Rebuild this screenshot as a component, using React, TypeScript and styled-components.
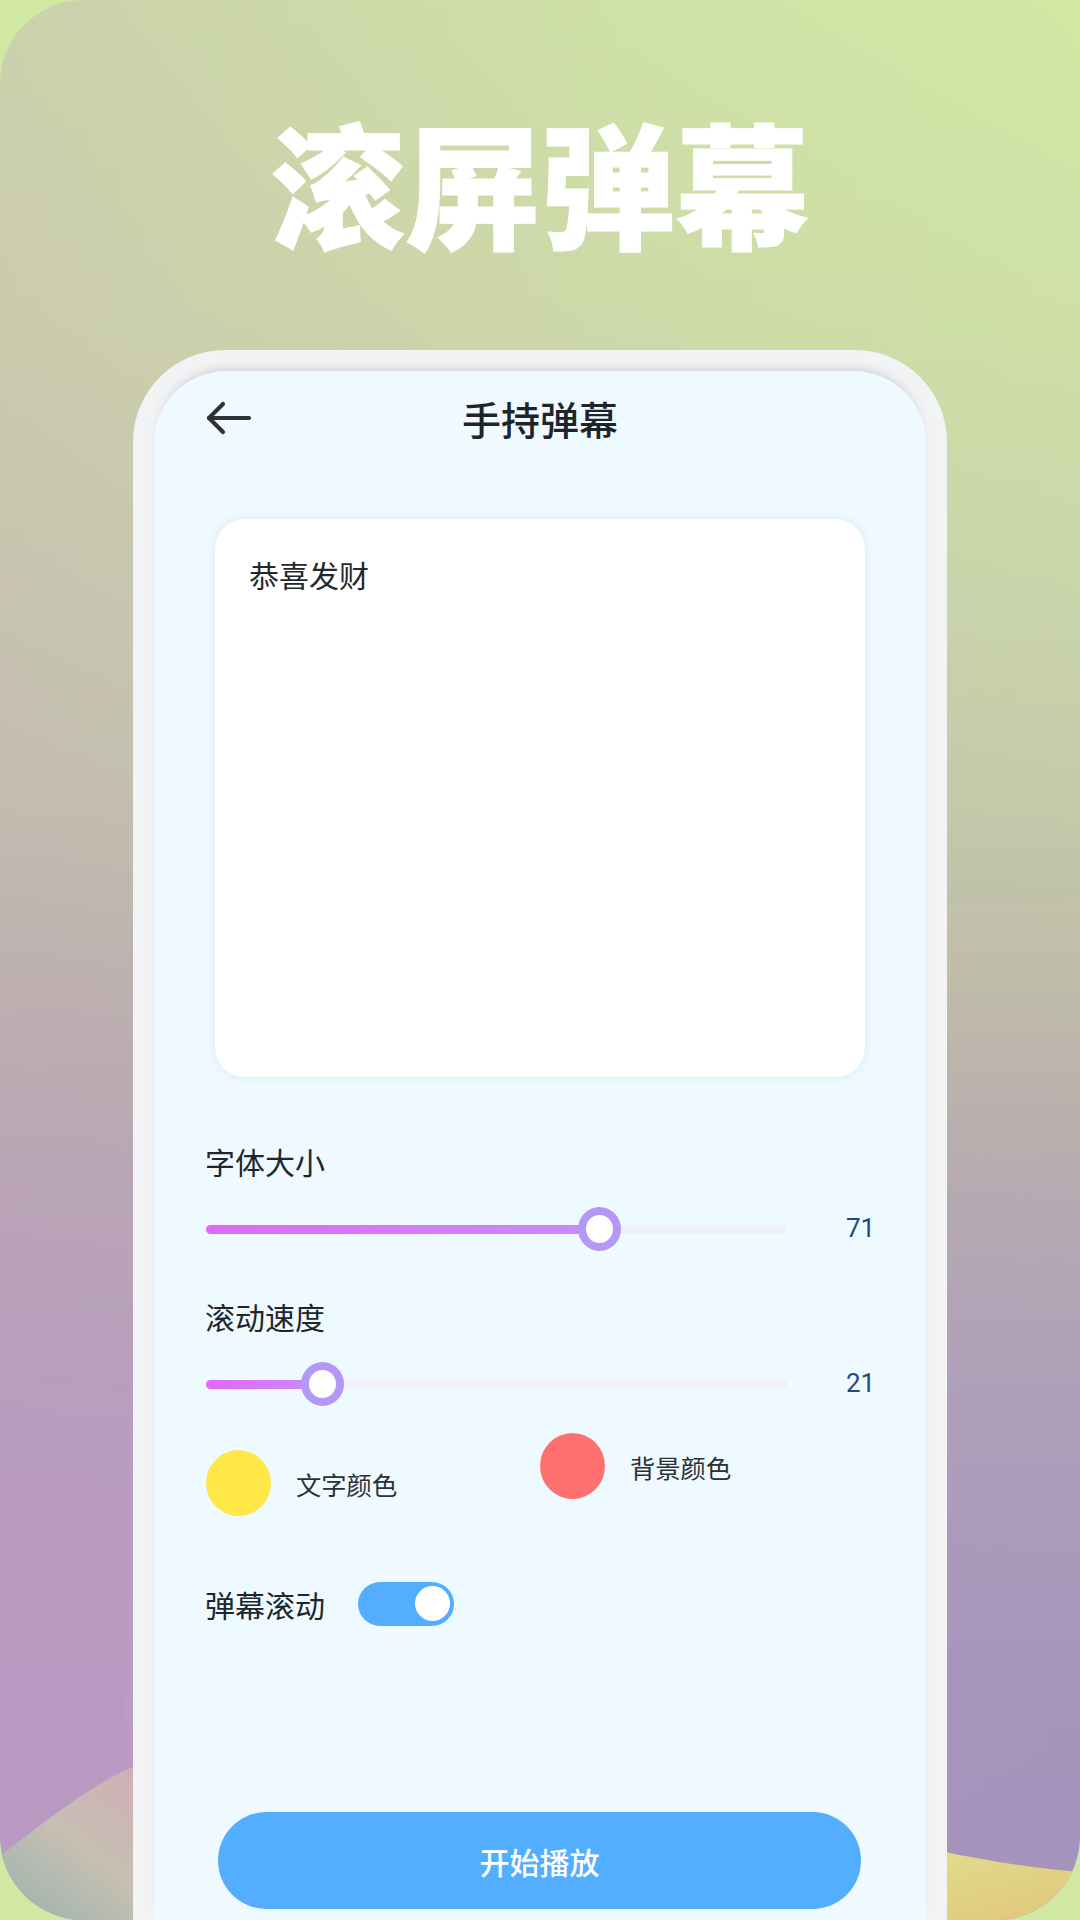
import React from "react";
import styled, { createGlobalStyle } from "styled-components";

const Global = createGlobalStyle`
  html, body { margin: 0; padding: 0; background: #d2e8a4; }
  body { width: 1080px; height: 1920px; overflow: hidden; }
  * { box-sizing: border-box; }
`;

const cjk = `"Noto Sans CJK SC", "Noto Sans", sans-serif`;

const Canvas = styled.div`
  width: 1080px;
  height: 1920px;
  background: #d0e8a2;
  overflow: hidden;
`;

const Poster = styled.div`
  position: relative;
  width: 1080px;
  height: 1920px;
  border-radius: 84px;
  overflow: hidden;
  display: flex;
  flex-direction: column;
  align-items: center;
  background:
    linear-gradient(90deg, rgba(192, 150, 192, 0.28) 0%, rgba(192, 150, 192, 0.08) 60%, rgba(192, 150, 192, 0) 100%),
    linear-gradient(180deg, #d0e8a4 0%, #cfe0a6 16%, #cad5aa 31%, #c4caa9 42%, #bfc1a9 47%, #b9b0ad 57%, #ae9fb9 73%, #a794bc 88%, #a592be 100%);
`;

const Waves = styled.svg`
  position: absolute;
  inset: 0;
  width: 1080px;
  height: 1920px;
`;

const Headline = styled.h1`
  position: relative;
  margin: 94px 0 0;
  font-family: ${cjk};
  font-size: 135px;
  line-height: 172px;
  font-weight: 900;
  color: #fff;
  -webkit-text-stroke: 1px #fff;
`;

const PhoneFrame = styled.div`
  position: relative;
  margin-top: 84px;
  width: 814px;
  flex: 1;
  padding: 21px 21px 0;
  background: #f2f3f5;
  border-radius: 92px 92px 0 0;
`;

const Screen = styled.div`
  height: 100%;
  padding: 0 60px 0 52px;
  background: #eefaff;
  border-radius: 72px 72px 0 0;
  box-shadow: 0 -7px 10px -5px rgba(110, 110, 120, 0.28);
  display: flex;
  flex-direction: column;
`;

const NavBar = styled.header`
  position: relative;
  height: 98px;
  padding-bottom: 4px;
  display: flex;
  align-items: center;
  justify-content: center;
`;

const BackButton = styled.svg`
  position: absolute;
  left: 0;
  top: 27px;
  width: 46px;
  height: 40px;
`;

const NavTitle = styled.h2`
  margin: 0 0 0 8px;
  font-family: ${cjk};
  font-size: 39px;
  font-weight: 500;
  color: #1f2428;
`;

const TextCard = styled.div`
  margin: 50px 1px 0 9px;
  height: 558px;
  padding: 33px 34px;
  background: #fff;
  border-radius: 30px;
  box-shadow: 0 0 8px rgba(190, 225, 235, 0.55);
  font-family: ${cjk};
  font-size: 30px;
  line-height: 44px;
  color: #24282c;
`;

const SliderBlock = styled.section<{ $top: number }>`
  margin-top: ${(p) => p.$top}px;
`;

const Label = styled.div`
  margin-left: -1px;
  font-family: ${cjk};
  font-size: 30px;
  line-height: 44px;
  color: #20262a;
`;

const SliderRow = styled.div`
  margin-top: 24px;
  margin-right: -7px;
  height: 44px;
  display: flex;
  align-items: center;
`;

const Track = styled.div`
  position: relative;
  width: 581px;
  height: 9px;
  border-radius: 5px;
  background: #f0f0fa;
`;

const Fill = styled.div`
  height: 100%;
  border-radius: 5px 0 0 5px;
  background: linear-gradient(90deg, #e268f8 0%, #c88cf8 100%);
`;

const Thumb = styled.div`
  position: absolute;
  top: 50%;
  width: 43px;
  height: 44px;
  margin: -22px 0 0 -21.5px;
  border-radius: 50%;
  border: 8px solid #b398f5;
  background: #fff;
`;

const Value = styled.div`
  margin: -3px 0 0 auto;
  width: 27px;
  font-family: Roboto, sans-serif;
  font-size: 26px;
  color: #1d4a82;
  white-space: nowrap;
`;

const SwatchRow = styled.div`
  margin-top: 27px;
  display: flex;
  align-items: flex-start;
`;

const Swatch = styled.div<{ $offset: number; $width: number }>`
  width: ${(p) => p.$width}px;
  margin-top: ${(p) => p.$offset}px;
  display: flex;
  align-items: center;
  gap: 25px;
`;

const Dot = styled.div<{ $color: string }>`
  width: 65px;
  height: 66px;
  border-radius: 50%;
  background: ${(p) => p.$color};
`;

const SwatchText = styled.span`
  font-family: ${cjk};
  font-size: 25.3px;
  line-height: 36px;
  color: #2a3034;
  margin-top: 2px;
`;

const ToggleRow = styled.div`
  margin-top: 66px;
  display: flex;
  align-items: center;
  gap: 33px;
`;

const Toggle = styled.div`
  width: 96px;
  height: 44px;
  padding: 4px;
  border-radius: 22px;
  background: #54aeff;
  display: flex;
  justify-content: flex-end;
`;

const Knob = styled.div`
  width: 35px;
  height: 35px;
  border-radius: 50%;
  background: #fff;
`;

const PlayButton = styled.button`
  margin: auto 5px 11px 12px;
  height: 97px;
  border: 0;
  border-radius: 49px;
  background: #54aeff;
  color: #fff;
  font-family: ${cjk};
  font-size: 30px;
  font-weight: 500;
`;

export default function App() {
  return (
    <Canvas>
      <Global />
      <Poster>
        <Waves viewBox="0 0 1080 1920" aria-hidden="true">
          <defs>
            <linearGradient id="leftWave" x1="0.9" y1="0" x2="0.2" y2="1">
              <stop offset="0" stopColor="#d0b0b6" />
              <stop offset="0.5" stopColor="#c6bfb2" />
              <stop offset="1" stopColor="#a0b4b0" />
            </linearGradient>
            <linearGradient id="rightWave" x1="0" y1="0" x2="0.6" y2="1">
              <stop offset="0" stopColor="#dfdc8c" />
              <stop offset="1" stopColor="#e2c87c" />
            </linearGradient>
            <linearGradient id="sideGlow" x1="0" y1="0" x2="0" y2="1">
              <stop offset="0" stopColor="#d2c8a8" stopOpacity="0.18" />
              <stop offset="1" stopColor="#d2c8a8" stopOpacity="0" />
            </linearGradient>
            <linearGradient id="leftTint" x1="0" y1="0" x2="0" y2="1">
              <stop offset="0" stopColor="#c8a0c8" stopOpacity="0" />
              <stop offset="0.6" stopColor="#c8a0c8" stopOpacity="0.45" />
              <stop offset="1" stopColor="#c8a0c8" stopOpacity="0.5" />
            </linearGradient>
          </defs>
          <rect x="0" y="1100" width="135" height="820" fill="url(#leftTint)" />
          <path d="M945 904 C990 902 1040 900 1080 899 L1080 1200 L945 1200 Z" fill="url(#sideGlow)" />
          <ellipse cx="160" cy="1680" rx="38" ry="100" fill="#bea6cc" opacity="0.22" />
          <path d="M0 1856 C45 1822 88 1786 135 1766 L135 1920 L0 1920 Z" fill="url(#leftWave)" />
          <path d="M945 1852 C985 1860 1030 1868 1080 1872 L1080 1920 L945 1920 Z" fill="url(#rightWave)" />
        </Waves>
        <Headline>滚屏弹幕</Headline>
        <PhoneFrame>
          <Screen>
            <NavBar>
              <BackButton viewBox="0 0 46 40" fill="none" stroke="#2f3336" strokeWidth="4.2" strokeLinecap="round" strokeLinejoin="round">
                <path d="M3 20 H43" />
                <path d="M17 6 L3 20 L17 34" />
              </BackButton>
              <NavTitle>手持弹幕</NavTitle>
            </NavBar>
            <TextCard>恭喜发财</TextCard>
            <SliderBlock $top={62}>
              <Label>字体大小</Label>
              <SliderRow>
                <Track>
                  <Fill style={{ width: "67.7%" }} />
                  <Thumb style={{ left: "67.7%" }} />
                </Track>
                <Value>71</Value>
              </SliderRow>
            </SliderBlock>
            <SliderBlock $top={43}>
              <Label>滚动速度</Label>
              <SliderRow>
                <Track>
                  <Fill style={{ width: "20%" }} />
                  <Thumb style={{ left: "20%" }} />
                </Track>
                <Value>21</Value>
              </SliderRow>
            </SliderBlock>
            <SwatchRow>
              <Swatch $offset={17} $width={334}>
                <Dot $color="#ffe748" />
                <SwatchText>文字颜色</SwatchText>
              </Swatch>
              <Swatch $offset={0} $width={200}>
                <Dot $color="#ff7171" />
                <SwatchText>背景颜色</SwatchText>
              </Swatch>
            </SwatchRow>
            <ToggleRow>
              <Label>弹幕滚动</Label>
              <Toggle>
                <Knob />
              </Toggle>
            </ToggleRow>
            <PlayButton>开始播放</PlayButton>
          </Screen>
        </PhoneFrame>
      </Poster>
    </Canvas>
  );
}
